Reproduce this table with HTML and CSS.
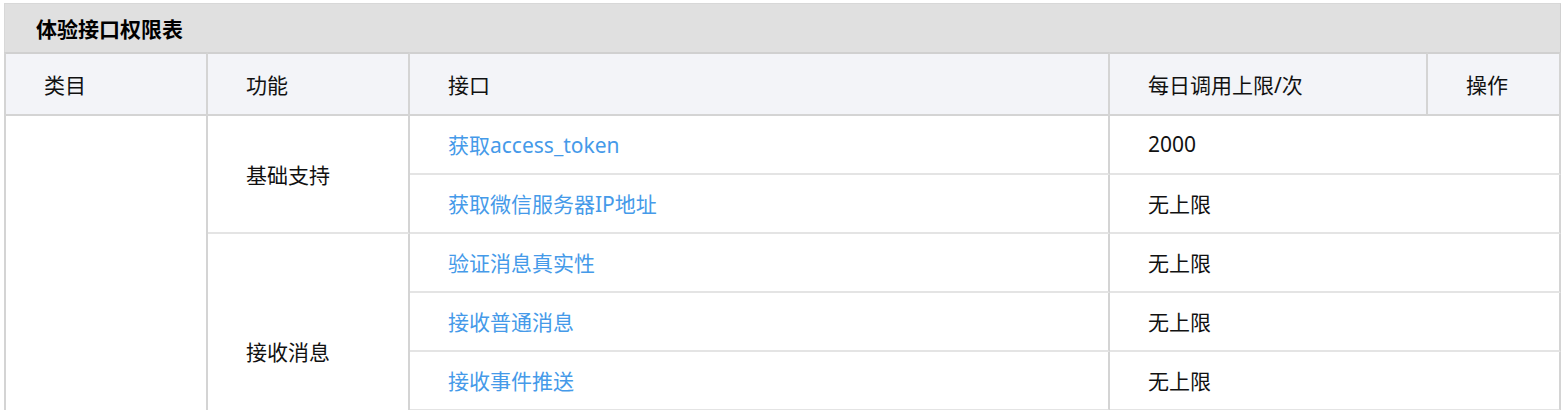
FILE: index.html
```html
<!DOCTYPE html>
<html lang="zh-CN">
<head>
<meta charset="utf-8">
<title>体验接口权限表</title>
<link rel="stylesheet" href="styles.css">
</head>
<body>
<div class="panel">
  <div class="panel-title">体验接口权限表</div>
  <table class="perm-table">
    <colgroup>
      <col class="c1"><col class="c2"><col class="c3"><col class="c4"><col class="c5">
    </colgroup>
    <thead>
      <tr>
        <th class="first">类目</th>
        <th>功能</th>
        <th>接口</th>
        <th>每日调用上限/次</th>
        <th>操作</th>
      </tr>
    </thead>
    <tbody>
      <tr>
        <td class="first cat" rowspan="6"></td>
        <td class="func" rowspan="2">基础支持</td>
        <td class="api"><a href="#">获取access_token</a></td>
        <td class="limit" colspan="2">2000</td>
      </tr>
      <tr>
        <td class="api"><a href="#">获取微信服务器IP地址</a></td>
        <td class="limit" colspan="2">无上限</td>
      </tr>
      <tr>
        <td class="func" rowspan="4">接收消息</td>
        <td class="api"><a href="#">验证消息真实性</a></td>
        <td class="limit" colspan="2">无上限</td>
      </tr>
      <tr>
        <td class="api"><a href="#">接收普通消息</a></td>
        <td class="limit" colspan="2">无上限</td>
      </tr>
      <tr>
        <td class="api"><a href="#">接收事件推送</a></td>
        <td class="limit" colspan="2">无上限</td>
      </tr>
      <tr>
        <td class="api"><a href="#">接收语音识别结果</a></td>
        <td class="limit" colspan="2">无上限</td>
      </tr>
    </tbody>
  </table>
</div>
</body>
</html>
```
FILE: styles.css
```css
html, body {
  margin: 0;
  padding: 0;
  background: #fff;
}

body {
  font-family: "Noto Sans", "Noto Sans CJK SC", sans-serif;
  font-size: 21px;
  color: #1a1a1a;
}

.panel {
  margin: 3px 0 0 4px;
  width: 1557px;
}

.panel-title {
  box-sizing: border-box;
  height: 49px;
  background: #e0e0e0;
  border-top: 1px solid #d8d8d8;
  border-left: 1px solid #d8d8d8;
  border-right: 1px solid #d0d0d0;
  padding-left: 31px;
  font-weight: bold;
  color: #000;
  line-height: 51px;
}

.perm-table {
  width: 1557px;
  table-layout: fixed;
  border-collapse: separate;
  border-spacing: 0;
}

.c1 { width: 204px; }
.c2 { width: 202px; }
.c3 { width: 700px; }
.c4 { width: 318px; }
.c5 { width: 133px; }

.perm-table th,
.perm-table td {
  padding: 0 0 0 38px;
  text-align: left;
  vertical-align: middle;
  font-weight: normal;
  box-sizing: border-box;
  border-right: 2px solid #d4d4d4;
}

.perm-table th {
  height: 64px;
  background: #f3f4f8;
  color: #111;
  border-top: 2px solid #d0d0d0;
  border-bottom: 2px solid #d4d4d4;
}

.perm-table .first {
  border-left: 2px solid #d4d4d4;
}

.perm-table td {
  height: 59px;
  padding-bottom: 1px;
  border-bottom: 2px solid #e4e4e4;
  color: #111;
}

.perm-table td.cat {
  border-bottom-color: #d4d4d4;
}

.perm-table a {
  color: #459ae9;
  text-decoration: none;
}
```
